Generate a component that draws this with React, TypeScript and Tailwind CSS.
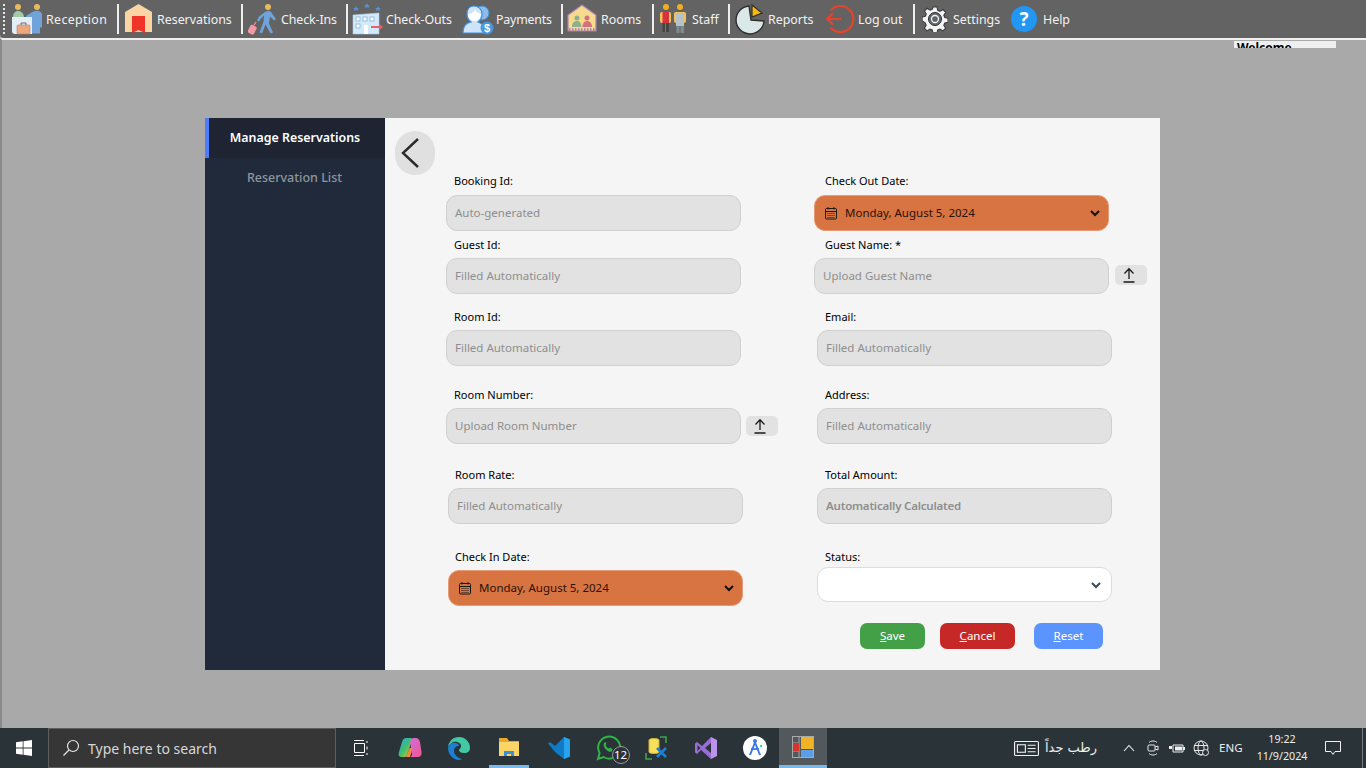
import React from "react";

const Reception = () => (
  <svg width="32" height="32" viewBox="0 0 32 32">
    <circle cx="6" cy="4" r="3" fill="#e9b95e" />
    <path d="M1 15c0-5 2-7 5-7s6 2 6 7v2H1z" fill="#9fcba6" />
    <circle cx="25" cy="4" r="3" fill="#e9b95e" />
    <path d="M14 13l7-4.500c2-1 6-1 7 0 2 1 2 3 2 6v10h-2v6h-9V16l-4 0z" fill="#6fa3da" />
    <path d="M0 14h20v17H3c-2 0-3-1-3-3z" fill="#e3eef6" />
    <rect x="5" y="22" width="13" height="9" rx="1" fill="#eda67e" stroke="#b9835f" strokeWidth="0.6" />
    <path d="M9 22v-2h5v2" fill="none" stroke="#6b6b6b" strokeWidth="1" />
  </svg>
);
const Reservation = () => (
  <svg width="29" height="30" viewBox="0 0 29 30">
    <path d="M14.500 0L28 8v20H1V8z" fill="#fbd4a4" />
    <path d="M8 12h13v17l-6.500-3L8 29z" fill="#f0342a" />
  </svg>
);
const CheckIn = () => (
  <svg width="31" height="32" viewBox="0 0 31 32">
    <circle cx="20" cy="4" r="3" fill="#e9b95e" />
    <path d="M17 9c2-1.500 5-1.500 6 0l5 7-2 1.500-4-4-1 7 4 9-2.500 1-5-9-3.500 9-2.500-1 4-11 .5-6-3 3-2 3-2-1 2-4z" fill="#6fa3da" />
    <rect x="1" y="22" width="7" height="9" rx="2" fill="#f19aa6" transform="rotate(28 4 26)" />
    <path d="M6 22l2-3" stroke="#f19aa6" strokeWidth="1.200" />
  </svg>
);
const CheckOut = () => (
  <svg width="32" height="32" viewBox="0 0 32 32">
    <g fill="#5b8fd0">
      <path d="M4 3l1 2 2 .1-1.500 1.200.5 2-2-1.200-2 1.200.5-2L1 5.100 3 5z" />
      <path d="M15 0l1 2 2 .1-1.500 1.200.5 2-2-1.200-2 1.200.5-2L12 2.100 14 2z" />
      <path d="M26 3l1 2 2 .1-1.500 1.200.5 2-2-1.200-2 1.200.5-2-1.500-1.200 2-.1z" />
    </g>
    <path d="M1 12l26-2v21H1z" fill="#d4e9f9" stroke="#a9cfee" strokeWidth="0.6" />
    <g fill="#fff" stroke="#7fb2df" strokeWidth="0.8">
      <rect x="4" y="14" width="4" height="4" />
      <rect x="11" y="14" width="4" height="4" />
      <rect x="18" y="14" width="4" height="4" />
      <rect x="4" y="21" width="4" height="4" />
    </g>
    <rect x="12" y="22" width="4" height="9" fill="#fff" />
    <path d="M19 24h10" stroke="#e8606a" strokeWidth="2" />
    <path d="M27 20.500l4 3.500-4 3.500z" fill="#e8606a" />
  </svg>
);
const Payments = () => (
  <svg width="32" height="32" viewBox="0 0 32 32">
    <circle cx="20" cy="10" r="7" fill="#8fbbe8" stroke="#3f8fdc" />
    <path d="M1 30c0-7 3-10 8-11-3-2-4-5-4-8 0-5 3-8 7-8s8 3 8 8c0 3-1 6-4 8 3 1 5 3 6 5v6z" fill="#cfe4f8" stroke="#3f8fdc" strokeWidth="1.200" />
    <path d="M6 11c3 0 6-2 7-4 1 2 3 3 6 4-.5 4-3 7-6.500 7S6 15 6 11z" fill="#fff" />
    <circle cx="25" cy="25" r="6.500" fill="#4b96de" />
    <text x="25" y="29" textAnchor="middle" fontSize="11" fontWeight="700" fill="#fff" fontFamily="Liberation Sans">$</text>
  </svg>
);
const Rooms = () => (
  <svg width="30" height="30" viewBox="0 0 30 30">
    <path d="M15 1l14 10v16H1V11z" fill="#f6da8e" stroke="#ab7fb2" strokeWidth="1.200" />
    <circle cx="10" cy="14" r="2.500" fill="#8fb08a" />
    <circle cx="20" cy="14" r="2.500" fill="#d5717c" />
    <path d="M5 23c0-4 2-6 5-6s4 2 4.500 6z" fill="#8fb08a" />
    <path d="M15.500 23c0-4 2-6 4.500-6s5 2 5 6z" fill="#d5717c" />
    <path d="M2 25.500h26" stroke="#a57db0" strokeWidth="2.400" strokeDasharray="1.500 1.500" />
  </svg>
);
const Staff = () => (
  <svg width="27" height="30" viewBox="0 0 27 30">
    <circle cx="6" cy="3" r="3" fill="#f2b01f" />
    <circle cx="20" cy="3" r="3" fill="#f2b01f" />
    <rect x="0" y="8" width="11" height="11" rx="2" fill="#f2c15b" />
    <rect x="2.500" y="8" width="6.500" height="11" fill="#d8323e" />
    <rect x="2.500" y="19" width="6.500" height="9" fill="#444" />
    <path d="M5.500 19v9" stroke="#777" />
    <rect x="14" y="8" width="12" height="11" rx="2" fill="#f2c15b" />
    <rect x="16" y="9" width="8" height="13" fill="#b5c2c7" />
    <rect x="16.500" y="22" width="7.500" height="7" fill="#7e8b90" />
    <path d="M20 22v7" stroke="#5c666a" />
  </svg>
);
const Reports = () => (
  <svg width="32" height="32" viewBox="0 0 32 32">
    <path d="M15 3A14 14 0 1 0 30 18L17 17z" fill="#dae8e8" stroke="#2f2f2f" strokeWidth="1.400" />
    <path d="M19 2l10 8-10 4z" fill="#f7b90f" stroke="#2f2f2f" strokeWidth="1.200" transform="translate(-1 0)" />
  </svg>
);
const Logout = () => (
  <svg width="30" height="30" viewBox="0 0 30 30" fill="none" stroke="#e8432a" strokeWidth="2.200">
    <path d="M5.500 6.500A13 13 0 1 1 5.500 23.500" />
    <path d="M2 15h14M8 9.500L2 15l6 5.500" />
  </svg>
);
const Gear = () => (
  <svg width="26" height="26" viewBox="0 0 26 26">
    <g fill="#f4f4f4" stroke="#3a3a3a" strokeWidth="1.100">
      <path d="M11 1h4l.7 3.400 2.300 1 3-1.900 2.700 2.700-1.900 3 1 2.300 3.200.7v4l-3.200.7-1 2.300 1.900 3-2.700 2.700-3-1.900-2.300 1-.7 3.400h-4l-.7-3.400-2.300-1-3 1.900-2.700-2.700 1.900-3-1-2.300L.1 15v-4l3.200-.7 1-2.300-1.900-3 2.700-2.700 3 1.900 2.300-1z" />
    </g>
    <circle cx="13" cy="13" r="6.500" fill="#5f6a70" stroke="#2c2c2c" />
    <circle cx="13" cy="13" r="3.500" fill="#636363" stroke="#f4f4f4" strokeWidth="1.300" />
  </svg>
);
const Help = () => (
  <div className="flex h-[26px] w-[26px] items-center justify-center rounded-full bg-[#2196f3] text-[19px] font-bold leading-none text-white">?</div>
);

const Sep = () => <div className="h-[30px] w-[2px] bg-[#eeeeee]" />;

type Tool = { label: string; icon: React.ReactNode; cls: string; iw: string; tc?: string };
const TB = ({ label, icon, cls, iw, tc }: Tool) => (
  <div className={`flex h-full items-center ${cls}`}>
    <div className={`flex items-center ${iw}`}>{icon}</div>
    <span className={`whitespace-nowrap pt-[2px] text-[12.400px] text-[#f2f2f2] ${tc ?? ""}`}>{label}</span>
  </div>
);

const Field = ({ label, cls, labelCls, box, children }: { label: string; cls?: string; labelCls: string; box: string; children: React.ReactNode }) => (
  <div className={cls}>
    <div className={`h-[14px] text-[11px] leading-[14px] text-black ${labelCls}`}>{label}</div>
    <div className={box}>{children}</div>
  </div>
);

const grey = "flex h-[36px] w-[295px] items-center rounded-[11px] border border-[#d0d0d0] bg-[#e2e2e2] pl-[8px] text-[11.500px] text-[#8e8e8e]";
const orange = "flex h-[36px] w-[295px] items-center rounded-[11px] border border-[#e79a76] bg-[#d87342] pl-[9px] pr-[8px] text-[11.500px] text-[#2a1208]";

const Cal = () => (
  <svg width="14" height="14" viewBox="0 0 14 14" fill="none" stroke="#1a1a1a" className="mr-[7px]">
    <rect x="1.500" y="2.500" width="11" height="10.500" rx="1" />
    <path d="M1.500 5.500h11M4 1v2.500M10 1v2.500" />
    <path d="M3.500 7.500h7M3.500 9.500h7M3.500 11.500h7" strokeDasharray="1 1" />
  </svg>
);
const Chev = ({ color = "#111" }: { color?: string }) => (
  <svg width="10" height="8" viewBox="0 0 10 8" fill="none" stroke={color} strokeWidth="2" className="ml-auto">
    <path d="M1 2l4 4 4-4" />
  </svg>
);
const Upload = ({ cls }: { cls?: string }) => (
  <div className={`flex h-[20px] w-[32px] items-center justify-center rounded-[5px] bg-[#e2e2e2] pr-[5px] ${cls ?? ""}`}>
    <svg width="14" height="16" viewBox="0 0 14 16" fill="none" stroke="#1a1a1a" strokeWidth="1.300">
      <path d="M7 12V2M2.500 6.500L7 1.800l4.500 4.700M1.500 15h11" />
    </svg>
  </div>
);

const Tray = ({ children, cls }: { children: React.ReactNode; cls: string }) => (
  <div className={`flex h-full items-center justify-center ${cls}`}>{children}</div>
);

export default function App() {
  return (
    <div className="flex h-[768px] w-[1366px] flex-col overflow-hidden bg-[#a9a9a9]" style={{ fontFamily: '"Noto Sans", "Open Sans", sans-serif' }}>
      <div className="flex h-[38px] shrink-0 items-center rounded-bl-[4px] bg-[#636363] pl-[3px]">
        <div className="mr-[6px] h-[30px] w-[3px] border-l-2 border-dotted border-[#e8e8e8]" />
        <div className="flex h-full items-center">
          <TB label="Reception" icon={<Reception />} cls="w-[105px]" iw="w-[34px]" tc="tracking-[0.35px]" />
          <Sep />
          <TB label="Reservations" icon={<Reservation />} cls="w-[122px] pl-[5px]" iw="w-[33px]" />
          <Sep />
          <TB label="Check-Ins" icon={<CheckIn />} cls="w-[103px] pl-[5px]" iw="w-[33px]" tc="tracking-[-0.1px]" />
          <Sep />
          <TB label="Check-Outs" icon={<CheckOut />} cls="w-[114px] pl-[4px]" iw="w-[34px]" tc="tracking-[-0.1px]" />
          <TB label="Payments" icon={<Payments />} cls="w-[99px]" iw="w-[34px]" tc="tracking-[-0.2px]" />
          <Sep />
          <TB label="Rooms" icon={<Rooms />} cls="w-[89px] pl-[4px]" iw="w-[34px]" />
          <Sep />
          <TB label="Staff" icon={<Staff />} cls="w-[74px] pl-[6px]" iw="w-[32px]" />
          <Sep />
          <TB label="Reports" icon={<Reports />} cls="w-[95px] pl-[4px]" iw="w-[34px]" />
          <TB label="Log out" icon={<Logout />} cls="w-[88px]" iw="w-[33px]" />
          <Sep />
          <TB label="Settings" icon={<Gear />} cls="w-[96px] pl-[7px]" iw="w-[31px]" />
          <TB label="Help" icon={<Help />} cls="w-[70px]" iw="w-[32px]" />
        </div>
      </div>

      <div className="relative flex-1 border-t-2 border-l-2 border-t-[#f0f0f0] border-l-[#8a8a8a] bg-[#a9a9a9]">
        <div className="absolute top-[1px] left-[1232px] h-[7px] w-[102px] overflow-hidden bg-[#efefef] pl-[3px] text-[12px] leading-[14px] font-bold text-black">Welcome</div>

        <div className="mt-[78px] ml-[203px] flex h-[552px] w-[955px]">
          <div className="w-[180px] shrink-0 bg-[#202a3a]">
            <div className="flex h-[40px] items-center justify-center border-l-4 border-[#4d7cff] bg-[#1e2432] pr-[4px] text-[12.400px] font-semibold text-white">Manage Reservations</div>
            <div className="flex h-[40px] items-center justify-center pr-[1px] text-[12.500px] font-medium text-[#8f96a0]">Reservation List</div>
          </div>
          <div className="flex-1 bg-[#f5f5f5] pt-[13px]">
            <div className="h-[43px] pl-[10px]">
              <div className="flex h-[44px] w-[40px] items-center justify-center rounded-full bg-[#e0e0e0] pr-[10px]">
                <svg width="20" height="32" viewBox="0 0 20 32" fill="none" stroke="#2b2b2b" strokeWidth="2.400">
                  <path d="M18 2L3 16l15 14" />
                </svg>
              </div>
            </div>
            <div className="flex pl-[61px]">
              <div className="w-[368px]">
                <Field label="Booking Id:" labelCls="pl-[8px]" box={`mt-[7px] ${grey}`}>Auto-generated</Field>
                <Field label="Guest Id:" cls="mt-[7px]" labelCls="pl-[8px]" box={`mt-[6px] ${grey}`}>Filled Automatically</Field>
                <Field label="Room Id:" cls="mt-[16px]" labelCls="pl-[8px]" box={`mt-[6px] ${grey}`}>Filled Automatically</Field>
                <Field label="Room Number:" cls="mt-[22px]" labelCls="pl-[8px]" box="mt-[6px] flex items-center gap-[5px]">
                  <div className={grey}>Upload Room Number</div>
                  <Upload />
                </Field>
                <Field label="Room Rate:" cls="mt-[24px]" labelCls="pl-[9px]" box={`ml-[2px] mt-[6px] ${grey}`}>Filled Automatically</Field>
                <Field label="Check In Date:" cls="mt-[26px]" labelCls="pl-[9px]" box={`ml-[2px] mt-[6px] ${orange}`}>
                  <Cal />Monday, August 5, 2024<Chev />
                </Field>
              </div>
              <div className="w-[340px]">
                <Field label="Check Out Date:" labelCls="pl-[11px]" box={`mt-[7px] ${orange}`}>
                  <Cal />Monday, August 5, 2024<Chev />
                </Field>
                <Field label="Guest Name: *" cls="mt-[7px]" labelCls="pl-[11px]" box="mt-[6px] flex items-center gap-[6px]">
                  <div className={grey}>Upload Guest Name</div>
                  <Upload cls="mb-[2px]" />
                </Field>
                <Field label="Email:" cls="mt-[16px]" labelCls="pl-[11px]" box={`ml-[3px] mt-[6px] ${grey}`}>Filled Automatically</Field>
                <Field label="Address:" cls="mt-[22px]" labelCls="pl-[11px]" box={`ml-[3px] mt-[6px] ${grey}`}>Filled Automatically</Field>
                <Field label="Total Amount:" cls="mt-[24px]" labelCls="pl-[11px]" box={`ml-[3px] mt-[6px] font-semibold tracking-[-0.2px] ${grey}`}>Automatically Calculated</Field>
                <Field label="Status:" cls="mt-[26px]" labelCls="pl-[11px]" box="ml-[3px] mt-[3px] flex h-[35px] w-[295px] items-center rounded-[11px] border border-[#dcdcdc] bg-white pr-[10px]">
                  <Chev color="#3f4a55" />
                </Field>
                <div className="mt-[21px] ml-[46px] flex text-[11.500px] text-white">
                  <div className="flex h-[26px] w-[65px] items-center justify-center rounded-[7px] bg-[#43a047]"><span><u>S</u>ave</span></div>
                  <div className="ml-[15px] flex h-[26px] w-[75px] items-center justify-center rounded-[7px] bg-[#c62828]"><span><u>C</u>ancel</span></div>
                  <div className="ml-[19px] flex h-[26px] w-[69px] items-center justify-center rounded-[7px] bg-[#5c94ff]"><span><u>R</u>eset</span></div>
                </div>
              </div>
            </div>
          </div>
        </div>
      </div>

      <div className="flex h-[40px] shrink-0 items-center bg-[#2a3337] text-white">
        <Tray cls="w-[48px]">
          <svg width="16" height="16" viewBox="0 0 16 16" fill="#fff"><path d="M0 2.300l6.700-1v6.300H0zM7.500 1.200L16 0v7.600H7.500zM0 8.400h6.700v6.300l-6.700-1zM7.500 8.400H16V16l-8.500-1.200z" /></svg>
        </Tray>
        <div className="flex h-full w-[288px] items-center border border-[#5f5f5f] bg-[#363636] pl-[13px]">
          <svg width="18" height="18" viewBox="0 0 18 18" fill="none" stroke="#e6e6e6" strokeWidth="1.200"><circle cx="11" cy="7" r="5.500" /><path d="M7 11l-5.500 5.500" /></svg>
          <span className="ml-[8px] text-[14px] text-[#d8d8d8]">Type here to search</span>
        </div>
        <Tray cls="w-[49px]">
          <svg width="16" height="16" viewBox="0 0 16 16" fill="none" stroke="#fff"><path d="M1 .5h10M1 15.500h10M1.500 3.500h10v9h-10zM14 1v2M14 6.500v3M14 13v2" /></svg>
        </Tray>
        <Tray cls="w-[49px]">
          <svg width="24" height="24" viewBox="0 0 24 24">
            <defs>
              <linearGradient id="cpA" x1="0" y1="0" x2="1" y2="1"><stop offset="0" stopColor="#2aa7e8" /><stop offset="0.5" stopColor="#3fbf6f" /><stop offset="1" stopColor="#f4c430" /></linearGradient>
              <linearGradient id="cpB" x1="0" y1="0" x2="1" y2="1"><stop offset="0" stopColor="#d16ee6" /><stop offset="1" stopColor="#f0568a" /></linearGradient>
            </defs>
            <path d="M8 2h5c1.500 0 1.500 1 1 2L9 19c-.5 1.500-1 2-3 2H4c-3 0-4-2-3-5l3-10c1-3 2-4 4-4z" fill="url(#cpA)" />
            <path d="M12 5l3-3h3c2 0 3 1 4 4l1.500 10c.5 3-1 5-4 5H13l-1.500 0c1 0 2-1 2.500-2z" fill="url(#cpB)" />
            <path d="M8 21l3.500-9h3L12 21z" fill="#f08a3c" />
          </svg>
        </Tray>
        <Tray cls="w-[49px]">
          <svg width="24" height="24" viewBox="0 0 24 24">
            <path d="M12 1a11 11 0 0 1 11 11c0 3-2 5-6 5-3 0-5-1-5-3 0-1 2-1 2-4 0-3-4-5-8-4-2 1-4 3-5 5C2 5 6 1 12 1z" fill="#40c9a2" />
            <path d="M1 12c1-4 4-6 8-5 2 .5 3 2 3 3-3 0-5 2-5 5s3 7 8 8c-1 .500-2 1-3 1C6 24 1 18 1 12z" fill="#1b7fd4" />
          </svg>
        </Tray>
        <div className="mr-[5px] ml-[6px] flex h-full w-[40px] flex-col items-center justify-center border-b-[3px] border-[#76b9ed]">
          <svg width="22" height="20" viewBox="0 0 22 20">
            <path d="M1 1h8l2 3h10v3H1z" fill="#e7a92a" />
            <rect x="1" y="5" width="20" height="14" fill="#fbd568" />
            <path d="M6 14h10v5h-3v-2H9v2H6z" fill="#3c8fd6" />
          </svg>
        </div>
        <Tray cls="w-[49px]">
          <svg width="24" height="24" viewBox="0 0 24 24">
            <path d="M17 1L8 10 3 6 1 7.500l7 8.500L17 23l6-2.500v-17z" fill="#0f7ac6" />
            <path d="M17 1l6 2.500v17L17 23z" fill="#27a2ee" />
          </svg>
        </Tray>
        <div className="flex h-full w-[49px] items-center justify-center">
          <div className="relative">
            <svg width="26" height="26" viewBox="0 0 26 26" fill="none">
              <path d="M3 24l1.600-6A11 11 0 1 1 8.500 22z" stroke="#2fb344" strokeWidth="2" />
              <path d="M9 8c-1 2 0 5 2.500 7s4.500 2.500 5.500 1l.500-2-2.500-1.500-1 1c-1.500-.5-3-2-3.500-3.500l1-1L10.500 7z" fill="#2fb344" />
            </svg>
            <div className="absolute top-[11px] left-[17px] flex h-[18px] w-[18px] items-center justify-center rounded-full border border-[#9a9a9a] bg-[#2a3337] text-[11.500px] leading-none">12</div>
          </div>
        </div>
        <Tray cls="w-[49px]">
          <svg width="24" height="24" viewBox="0 0 24 24">
            <path d="M4 4c0-2 10-2 10 0v12c0 2-10 2-10 0z" fill="#f8e05a" stroke="#c8b23a" />
            <path d="M15 1h6v6M1 17v6h6" fill="none" stroke="#3fa34d" strokeWidth="1.600" />
            <path d="M12 12l9 9M21 12l-9 9" stroke="#1f7fd0" strokeWidth="2.600" />
          </svg>
        </Tray>
        <Tray cls="w-[49px]">
          <svg width="24" height="24" viewBox="0 0 24 24">
            <path d="M17 1L8 10 3 6 1 7.500v9L3 18l4-4 10 9z" fill="#9a6cd6" />
            <path d="M17 1l6 3v16l-6 3z" fill="#bb93ec" />
            <path d="M17 7v10l-6-5z" fill="#2a3337" />
            <path d="M3.500 9v6l3-3z" fill="#2a3337" />
          </svg>
        </Tray>
        <Tray cls="w-[49px]">
          <svg width="24" height="24" viewBox="0 0 24 24">
            <circle cx="12" cy="12" r="12" fill="#fff" />
            <path d="M12 4l6 15h-2l-4-10-4 10H6z" fill="#3b78e7" />
            <path d="M8 13h8" stroke="#3b78e7" strokeWidth="1.800" />
            <circle cx="12" cy="5" r="2" fill="#3b78e7" />
            <circle cx="18" cy="10" r="1.200" fill="#3ddc84" />
          </svg>
        </Tray>
        <div className="flex h-full w-[48px] items-center justify-center border-b-[3px] border-[#76b9ed] bg-[#52585b]">
          <svg width="22" height="22" viewBox="0 0 22 22">
            <rect x="0.500" y="0.500" width="21" height="21" fill="none" stroke="#a9a9a9" />
            <path d="M7 .5v21M.5 7h6M.5 15h6" stroke="#a9a9a9" />
            <rect x="1" y="7" width="6" height="8" fill="#d8342c" />
            <rect x="9" y="1" width="12" height="12" fill="#f0b323" />
            <rect x="9" y="14" width="12" height="7" fill="#5a9fe8" />
          </svg>
        </div>

        <Tray cls="ml-[186px] w-[26px]">
          <svg width="25" height="15" viewBox="0 0 22 14" fill="none" stroke="#f0f0f0" preserveAspectRatio="none"><rect x=".5" y=".5" width="21" height="13" rx="1" /><rect x="3" y="3.500" width="7" height="7" /><path d="M12 4h7M12 7h7M12 10h7" /></svg>
        </Tray>
        <span dir="rtl" className="ml-[5px] w-[54px] text-center text-[13px] whitespace-nowrap text-[#eeeeee]" style={{ fontFamily: '"DejaVu Sans", "Noto Sans", sans-serif' }}>رطب جداً</span>
        <svg width="12" height="8" viewBox="0 0 12 8" fill="none" stroke="#f0f0f0" strokeWidth="1.100" className="ml-[25px]"><path d="M1 7l5-5.500L11 7" /></svg>
        <svg width="12" height="16" viewBox="0 0 12 16" fill="none" stroke="#e8e8e8" className="ml-[12px]"><path d="M2 2.500C4 .5 8 .5 10 2.500M2 13.500c2 2 6 2 8 0" /><rect x="1" y="5" width="7" height="6" rx="1" /><path d="M8 7l3-1v4l-3-1" /></svg>
        <svg width="16" height="12" viewBox="0 0 16 12" fill="#f0f0f0" className="ml-[10px]"><path d="M4 3h10v7H4z" fill="none" stroke="#f0f0f0" /><rect x="6" y="4.500" width="7" height="4" /><rect x="0" y="4" width="3" height="3" /><path d="M14 5h2v3h-2z" /></svg>
        <svg width="16" height="16" viewBox="0 0 16 16" fill="none" stroke="#e8e8e8" className="ml-[8px]"><circle cx="8" cy="8" r="7" /><ellipse cx="8" cy="8" rx="3" ry="7" /><path d="M1 5.500h14M1 10.500h14" /><circle cx="12.500" cy="12.500" r="3" fill="#2a3337" /></svg>
        <span className="ml-[10px] w-[28px] text-[11.500px] text-[#eeeeee]">ENG</span>
        <div className="ml-[1px] flex w-[68px] flex-col items-center text-[10.700px] leading-[17px] text-[#eeeeee]">
          <span>19:22</span>
          <span>11/9/2024</span>
        </div>
        <svg width="16" height="15" viewBox="0 0 16 15" fill="none" stroke="#f0f0f0" className="ml-[9px]"><path d="M.5.500h15v10H10l-2 3-2-3H.5z" /></svg>
        <div className="ml-[21px] h-full w-px bg-[#7a7a7a]" />
      </div>
    </div>
  );
}
